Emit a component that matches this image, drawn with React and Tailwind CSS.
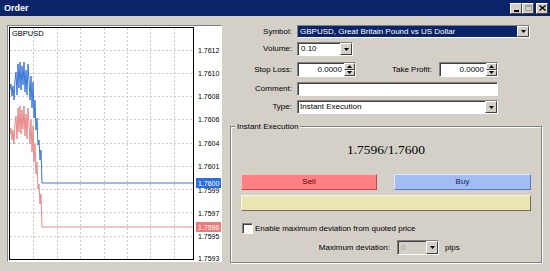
import React from "react";

const F = { fontFamily: '"Liberation Sans", Arial, sans-serif' };

function DropBtn() {
  return (
    <div className="w-[12px] h-full bg-[#d4d0c8] border border-t-white border-l-white border-b-[#404040] border-r-[#404040] flex items-center justify-center">
      <svg width="5" height="3" viewBox="0 0 5 3"><path d="M0 0h5L2.5 3z" fill="#000" /></svg>
    </div>
  );
}

function Spin() {
  return (
    <div className="w-[11px] h-full flex flex-col">
      <div className="flex-1 bg-[#d4d0c8] border border-t-white border-l-white border-b-[#404040] border-r-[#404040] flex items-center justify-center">
        <svg width="5" height="3" viewBox="0 0 5 3"><path d="M0 3h5L2.5 0z" fill="#000" /></svg>
      </div>
      <div className="flex-1 bg-[#d4d0c8] border border-t-white border-l-white border-b-[#404040] border-r-[#404040] flex items-center justify-center">
        <svg width="5" height="3" viewBox="0 0 5 3"><path d="M0 0h5L2.5 3z" fill="#000" /></svg>
      </div>
    </div>
  );
}

const sunken =
  "border border-t-[#808080] border-l-[#808080] border-b-white border-r-white shadow-[inset_1px_1px_0_#404040] bg-white flex items-stretch";

function Label({ children, w = "w-[67px]" }) {
  return <div className={`${w} text-right pr-[5px] leading-none`}>{children}</div>;
}

function Chart() {
  const blue = [
    [10, 90], [11, 84], [12, 96], [13, 86], [14, 100], [15, 80], [16, 72], [17, 95], [18, 64], [19, 88],
    [20, 62], [21, 90], [22, 66], [23, 85], [24, 62], [25, 92], [26, 70], [27, 95], [28, 64], [29, 80],
    [30, 100], [31, 76], [32, 108], [33, 82], [34, 118], [35, 100], [36, 130], [37, 118], [38, 145],
    [39, 140], [40, 160], [41, 150], [42, 183], [193, 183],
  ];
  const red = blue.map(([x, y], i) => (i >= blue.length - 2 ? [x, 227] : [x, y + 44]));
  const pts = (a) => a.map(([x, y]) => `${x},${y}`).join(" ");
  const vx = [33, 57, 80, 104, 127, 150, 174];
  const hy = [50, 73, 96, 119, 143, 166, 189, 212, 236];
  const labels = [
    ["1.7612", 50], ["1.7610", 73], ["1.7608", 96], ["1.7606", 119], ["1.7604", 143], ["1.7601", 166],
    ["1.7599", 190], ["1.7597", 213], ["1.7595", 236], ["1.7593", 258],
  ];
  return (
    <div className="w-[215px] h-[237px] border border-t-[#808080] border-l-[#808080] border-b-white border-r-white bg-white">
      <svg width="213" height="235" viewBox="8 26 213 235" style={F}>
        <rect x="8" y="26" width="213" height="235" fill="#fff" />
        {vx.map((x) => (
          <line key={x} x1={x + 0.5} y1="28" x2={x + 0.5} y2="259" stroke="#c8c8c8" strokeDasharray="2 2" />
        ))}
        {hy.map((y) => (
          <line key={y} x1="10" y1={y + 0.5} x2="193" y2={y + 0.5} stroke="#c8c8c8" strokeDasharray="2 2" />
        ))}
        <polyline points={pts(red)} fill="none" stroke="#e88a8a" strokeWidth="1" />
        <polyline points={pts(blue)} fill="none" stroke="#3a78d8" strokeWidth="1" />
        <rect x="9.5" y="27.5" width="184" height="232" fill="none" stroke="#000" />
        <text x="12" y="36" fontSize="7.5" fill="#000">GBPUSD</text>
        {labels.map(([t, y]) => (
          <text key={t} x="198" y={y + 2.5} fontSize="7" fill="#000">{t}</text>
        ))}
        <rect x="196" y="178" width="25" height="10" fill="#2a6fe0" />
        <text x="198" y="185.5" fontSize="7" fill="#fff">1.7600</text>
        <rect x="196" y="222" width="25" height="10" fill="#ee7a7a" />
        <text x="198" y="229.5" fontSize="7" fill="#fff">1.7596</text>
      </svg>
    </div>
  );
}

export default function App() {
  return (
    <div className="w-[550px] h-[271px] bg-[#d4d0c8] overflow-hidden text-[8px] text-black" style={F}>
      <div className="h-[16px] bg-[#0a246a] flex items-center justify-between pl-[4px] pr-[2px]">
        <span className="text-white font-bold text-[9px] leading-none">Order</span>
        <div className="flex items-center">
          <div className="w-[12px] h-[11px] bg-[#d4d0c8] border border-t-white border-l-white border-b-[#404040] border-r-[#404040] flex items-end justify-center pb-[1px]">
            <div className="w-[5px] h-[2px] bg-black" />
          </div>
          <div className="w-[12px] h-[11px] bg-[#d4d0c8] border border-t-white border-l-white border-b-[#404040] border-r-[#404040] flex items-center justify-center">
            <div className="w-[7px] h-[6px] border border-[#a0a0a0] border-t-2" />
          </div>
          <div className="ml-[2px] w-[12px] h-[11px] bg-[#d4d0c8] border border-t-white border-l-white border-b-[#404040] border-r-[#404040] flex items-center justify-center">
            <svg width="7" height="6" viewBox="0 0 7 6"><path d="M0.5 0.5l6 5M6.5 0.5l-6 5" stroke="#000" strokeWidth="1.4" /></svg>
          </div>
        </div>
      </div>

      <div className="flex pt-[9px] pl-[7px]">
        <Chart />

        <div className="ml-[8px] w-[312px] flex flex-col">
          <div className="flex items-center h-[13px]">
            <Label>Symbol:</Label>
            <div className={`${sunken} w-[233px] h-[13px]`}>
              <div className="flex-1 bg-[#0a246a] text-white pl-[2px] leading-[11px]">GBPUSD, Great Britain Pound vs US Dollar</div>
              <DropBtn />
            </div>
          </div>

          <div className="flex items-center h-[14px] mt-[4px]">
            <Label>Volume:</Label>
            <div className={`${sunken} w-[56px] h-[14px]`}>
              <div className="flex-1 pl-[3px] leading-[12px]">0.10</div>
              <DropBtn />
            </div>
          </div>

          <div className="flex items-center h-[15px] mt-[6px]">
            <Label>Stop Loss:</Label>
            <div className={`${sunken} w-[59px] h-[15px]`}>
              <div className="flex-1 text-right pr-[2px] leading-[13px]">0.0000</div>
              <Spin />
            </div>
            <div className="w-[83px] text-right pr-[7px] leading-none">Take Profit:</div>
            <div className={`${sunken} w-[59px] h-[15px]`}>
              <div className="flex-1 text-right pr-[2px] leading-[13px]">0.0000</div>
              <Spin />
            </div>
          </div>

          <div className="flex items-center h-[14px] mt-[5px]">
            <Label>Comment:</Label>
            <div className={`${sunken} w-[201px] h-[14px]`} />
          </div>

          <div className="flex items-center h-[14px] mt-[4px]">
            <Label>Type:</Label>
            <div className={`${sunken} w-[201px] h-[14px]`}>
              <div className="flex-1 pl-[2px] leading-[12px]">Instant Execution</div>
              <DropBtn />
            </div>
          </div>

          <div className="relative mt-[12px] w-[312px] h-[137px] border border-[#808080] shadow-[inset_1px_1px_0_#fff,1px_1px_0_#fff] flex flex-col">
            <div className="absolute left-[4px] top-[-5px] bg-[#d4d0c8] px-[2px] leading-[10px]">Instant Execution</div>
            <div className="mt-[15px] text-center text-[13.5px] leading-[15px]" style={{ fontFamily: '"Liberation Serif", "Times New Roman", serif' }}>
              1.7596/1.7600
            </div>
            <div className="flex mt-[17px] ml-[10px] gap-[17px]">
              <div className="w-[136px] h-[16px] bg-[#ff8080] border border-t-[#ffc0c0] border-l-[#ffc0c0] border-b-[#c04848] border-r-[#c04848] flex items-center justify-center text-[#600000] leading-none">Sell</div>
              <div className="w-[137px] h-[16px] bg-[#a2bcf4] border border-t-[#dce6fc] border-l-[#dce6fc] border-b-[#5878c0] border-r-[#5878c0] flex items-center justify-center text-[#102060] leading-none">Buy</div>
            </div>
            <div className="ml-[10px] mt-[5px] w-[290px] h-[16px] bg-[#ebe7b4] border border-t-[#fbf8de] border-l-[#fbf8de] border-b-[#707050] border-r-[#707050]" />
            <div className="flex items-center ml-[11px] mt-[12px] h-[11px]">
              <div className="w-[11px] h-[11px] bg-white border border-t-[#808080] border-l-[#808080] border-b-white border-r-white shadow-[inset_1px_1px_0_#404040]" />
              <span className="ml-[2px] leading-none">Enable maximum deviation from quoted price</span>
            </div>
            <div className="flex items-center mt-[6px] h-[15px]">
              <div className="w-[166px] text-right pr-[7px] leading-none">Maximum deviation:</div>
              <div className="w-[42px] h-[15px] border border-t-[#808080] border-l-[#808080] border-b-white border-r-white shadow-[inset_1px_1px_0_#404040] bg-[#d4d0c8] flex items-stretch">
                <div className="flex-1 pl-[3px] text-[#a0a0a0] leading-[13px]">0</div>
                <DropBtn />
              </div>
              <span className="ml-[6px] leading-none">pips</span>
            </div>
          </div>
        </div>
      </div>
    </div>
  );
}
